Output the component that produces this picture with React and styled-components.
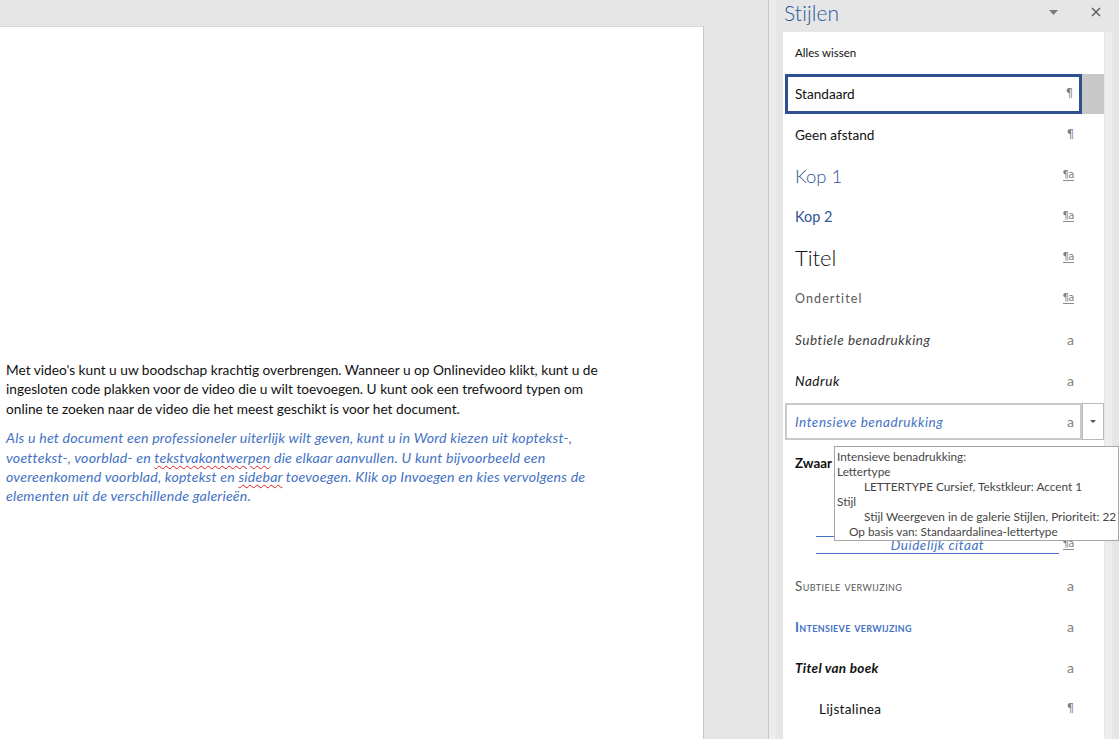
import React from 'react';
import styled, { createGlobalStyle, css } from 'styled-components';

const GlobalStyle = createGlobalStyle`
  html, body {
    margin: 0;
    padding: 0;
    overflow: hidden;
    background: #e6e6e6;
  }
  * {
    box-sizing: border-box;
  }
`;

const BLUE = '#4472c4';
const HEAD_BLUE = '#2f5496';

const Window = styled.div`
  position: relative;
  display: flex;
  width: 1119px;
  height: 739px;
  background: #e6e6e6;
  font-family: Lato, 'Liberation Sans', sans-serif;
  overflow: hidden;
`;

/* ---------- document ---------- */
const DocArea = styled.div`
  width: 769px;
  flex: none;
  padding-top: 26px;
  border-right: 1px solid #c8c8c8;
`;

const Page = styled.div`
  width: 704px;
  height: 713px;
  background: #fff;
  border-top: 1px solid #d8d8d8;
  border-right: 1px solid #c6c6c6;
  padding: 333px 0 0 6px;
`;

const Para = styled.p`
  margin: 0 0 10px;
  font-family: Lato, 'Liberation Sans', sans-serif;
  line-height: 19.4px;
  white-space: nowrap;
  ${(p) =>
    p.$quote
      ? css`
          font-size: 14.2px;
          letter-spacing: 0.2px;
          font-style: italic;
          color: ${BLUE};
        `
      : css`
          font-size: 13.7px;
          color: #111;
        `}
`;

const Misspelled = styled.span`
  text-decoration: underline wavy #e02020;
  text-decoration-thickness: 1px;
  text-underline-offset: 2px;
`;

/* ---------- styles pane ---------- */
const Pane = styled.div`
  flex: 1;
  display: flex;
  flex-direction: column;
  padding-left: 14px;
  box-shadow: inset 7px 0 0 #ececec;
`;

const PaneHeader = styled.div`
  height: 32px;
  display: flex;
  align-items: center;
  justify-content: space-between;
  padding: 0 18px 8px 1px;
`;

const PaneTitle = styled.h1`
  margin: 0;
  font-family: Lato, 'Open Sans', sans-serif;
  font-weight: 300;
  font-size: 21px;
  color: #2b579a;
  letter-spacing: 0.1px;
`;

const HeaderTools = styled.div`
  display: flex;
  align-items: center;
  gap: 33px;
  color: #6a6a6a;
`;

const PaneBody = styled.div`
  flex: 1;
  display: flex;
`;

const StyleList = styled.div`
  width: 321px;
  background: #fff;
  display: flex;
  flex-direction: column;
`;

const ScrollTrack = styled.div`
  width: 15px;
  border-left: 1px solid #e6e6e6;
  box-shadow: inset 7px 0 0 #eeeeee;
`;

const Row = styled.div`
  height: 41px;
  flex: none;
  display: flex;
  align-items: center;
`;

const RowMain = styled.div`
  width: 297px;
  margin-left: 2px;
  height: ${(p) => (p.$state === 'selected' ? 40 : 37)}px;
  display: flex;
  align-items: center;
  justify-content: space-between;
  padding: 0 6px 0 ${(p) => 10 - (p.$state === 'selected' ? 3 : 2)}px;
  border: ${(p) =>
    p.$state === 'selected'
      ? '3px solid #2e5090'
      : p.$state === 'hover'
      ? '2px solid #c9c9c9'
      : '2px solid transparent'};
`;

const RowSide = styled.div`
  width: 22px;
  height: ${(p) => (p.$state === 'selected' ? 40 : 37)}px;
  display: flex;
  align-items: center;
  justify-content: center;
  ${(p) =>
    p.$state === 'selected' &&
    css`
      background: #c8c8c8;
    `}
  ${(p) =>
    p.$state === 'hover' &&
    css`
      border: 1px solid #b9b9b9;
    `}
`;

const Caret = styled.span`
  width: 0;
  height: 0;
  border-left: 3px solid transparent;
  border-right: 3px solid transparent;
  border-top: 3px solid #555;
`;

const italicSample = css`
  font-size: 13.5px;
  font-style: italic;
  letter-spacing: 0.55px;
`;

const sampleStyles = {
  plain: css`
    font-size: 13.6px;
    color: #111;
  `,
  ui: css`
    font-size: 11.5px;
    color: #111;
  `,
  kop1: css`
    font-size: 18.5px;
    font-weight: 300;
    color: ${HEAD_BLUE};
  `,
  kop2: css`
    font-size: 14.5px;
    color: ${HEAD_BLUE};
  `,
  titel: css`
    font-size: 22px;
    font-weight: 300;
    color: #111;
  `,
  ondertitel: css`
    font-size: 12.5px;
    letter-spacing: 1.1px;
    color: #595959;
  `,
  subtiel: css`
    ${italicSample};
    color: #404040;
  `,
  nadruk: css`
    ${italicSample};
    color: #111;
  `,
  intensief: css`
    ${italicSample};
    color: ${BLUE};
  `,
  zwaar: css`
    font-size: 13.4px;
    font-weight: 700;
    color: #111;
  `,
  citaat: css`
    ${italicSample};
    color: #404040;
    flex: 1;
    text-align: center;
  `,
  subVerw: css`
    font-size: 13.4px;
    letter-spacing: 0.4px;
    font-variant: small-caps;
    color: #595959;
  `,
  intVerw: css`
    font-size: 13.4px;
    letter-spacing: 0.3px;
    font-variant: small-caps;
    font-weight: 700;
    color: ${BLUE};
  `,
  boek: css`
    font-size: 13.5px;
    letter-spacing: 0.3px;
    font-weight: 700;
    font-style: italic;
    color: #111;
  `,
  lijst: css`
    font-size: 13.6px;
    letter-spacing: 0.3px;
    color: #111;
    padding-left: 24px;
  `,
};

const Sample = styled.span`
  font-family: Lato, 'Liberation Sans', sans-serif;
  white-space: nowrap;
  ${(p) => sampleStyles[p.$kind]}
`;

const QuoteSample = styled.span`
  width: 243px;
  margin-left: 21px;
  height: 18px;
  border-top: 1px solid ${BLUE};
  border-bottom: 1px solid ${BLUE};
  display: flex;
  align-items: center;
  justify-content: center;
  font-family: Lato, 'Liberation Sans', sans-serif;
  ${italicSample};
  color: ${BLUE};
`;

const Mark = styled.span`
  font-family: 'DejaVu Sans', sans-serif;
  font-size: 11.5px;
  color: #7f7f7f;
  line-height: 1;
  white-space: nowrap;
  ${(p) =>
    p.$type === 'link' &&
    css`
      font-size: 10px;
      letter-spacing: -0.5px;
      border-bottom: 1.5px solid #8a8a8a;
    `}
  ${(p) =>
    p.$type === 'a' &&
    css`
      font-family: Lato, 'Liberation Sans', sans-serif;
      font-size: 14px;
    `}
`;

const Tooltip = styled.div`
  position: absolute;
  left: 834px;
  top: 446px;
  width: 285px;
  height: 95px;
  background: #fff;
  border: 1px solid #a6a6a6;
  padding: 2px 0 0 2px;
  font-family: Lato, 'Liberation Sans', sans-serif;
  font-size: 11.8px;
  line-height: 15px;
  color: #454545;
  white-space: nowrap;
`;

const TipLine = styled.div`
  padding-left: ${(p) => p.$indent || 0}px;
`;

const markGlyph = { para: '¶', link: '¶a', a: 'a' };

const styleRows = [
  { label: 'Alles wissen', kind: 'ui' },
  { label: 'Standaard', kind: 'plain', mark: 'para', state: 'selected' },
  { label: 'Geen afstand', kind: 'plain', mark: 'para' },
  { label: 'Kop 1', kind: 'kop1', mark: 'link' },
  { label: 'Kop 2', kind: 'kop2', mark: 'link' },
  { label: 'Titel', kind: 'titel', mark: 'link' },
  { label: 'Ondertitel', kind: 'ondertitel', mark: 'link' },
  { label: 'Subtiele benadrukking', kind: 'subtiel', mark: 'a' },
  { label: 'Nadruk', kind: 'nadruk', mark: 'a' },
  { label: 'Intensieve benadrukking', kind: 'intensief', mark: 'a', state: 'hover' },
  { label: 'Zwaar', kind: 'zwaar', mark: 'a' },
  { label: 'Citaat', kind: 'citaat', mark: 'link' },
  { label: 'Duidelijk citaat', kind: 'quote', mark: 'link' },
  { label: 'Subtiele verwijzing', kind: 'subVerw', mark: 'a' },
  { label: 'Intensieve verwijzing', kind: 'intVerw', mark: 'a' },
  { label: 'Titel van boek', kind: 'boek', mark: 'a' },
  { label: 'Lijstalinea', kind: 'lijst', mark: 'para' },
];

function StyleRow({ row }) {
  return (
    <Row>
      <RowMain $state={row.state}>
        {row.kind === 'quote' ? (
          <QuoteSample>{row.label}</QuoteSample>
        ) : (
          <Sample $kind={row.kind}>{row.label}</Sample>
        )}
        {row.mark && <Mark $type={row.mark}>{markGlyph[row.mark]}</Mark>}
      </RowMain>
      <RowSide $state={row.state}>{row.state === 'hover' && <Caret />}</RowSide>
    </Row>
  );
}

export default function App() {
  return (
    <Window>
      <GlobalStyle />
      <DocArea>
        <Page>
          <Para>
            Met video's kunt u uw boodschap krachtig overbrengen. Wanneer u op Onlinevideo klikt, kunt u de
            <br />
            ingesloten code plakken voor de video die u wilt toevoegen. U kunt ook een trefwoord typen om
            <br />
            online te zoeken naar de video die het meest geschikt is voor het document.
          </Para>
          <Para $quote>
            Als u het document een professioneler uiterlijk wilt geven, kunt u in Word kiezen uit koptekst-,
            <br />
            voettekst-, voorblad- en <Misspelled>tekstvakontwerpen</Misspelled> die elkaar aanvullen. U kunt bijvoorbeeld een
            <br />
            overeenkomend voorblad, koptekst en <Misspelled>sidebar</Misspelled> toevoegen. Klik op Invoegen en kies vervolgens de
            <br />
            elementen uit de verschillende galerieën.
          </Para>
        </Page>
      </DocArea>

      <Pane>
        <PaneHeader>
          <PaneTitle>Stijlen</PaneTitle>
          <HeaderTools>
            <svg width="9" height="5" viewBox="0 0 9 5">
              <path d="M0 0 H9 L4.5 5 Z" fill="#7a7a7a" />
            </svg>
            <svg width="10" height="10" viewBox="0 0 10 10">
              <path d="M1 1 L9 9 M9 1 L1 9" stroke="#555" strokeWidth="1.3" />
            </svg>
          </HeaderTools>
        </PaneHeader>
        <PaneBody>
          <StyleList>
            {styleRows.map((row) => (
              <StyleRow key={row.label} row={row} />
            ))}
          </StyleList>
          <ScrollTrack />
        </PaneBody>
      </Pane>

      <Tooltip>
        <TipLine>Intensieve benadrukking:</TipLine>
        <TipLine>Lettertype</TipLine>
        <TipLine $indent={27}>LETTERTYPE Cursief, Tekstkleur: Accent 1</TipLine>
        <TipLine>Stijl</TipLine>
        <TipLine $indent={27}>Stijl Weergeven in de galerie Stijlen, Prioriteit: 22</TipLine>
        <TipLine $indent={12}>Op basis van: Standaardalinea-lettertype</TipLine>
      </Tooltip>
    </Window>
  );
}
